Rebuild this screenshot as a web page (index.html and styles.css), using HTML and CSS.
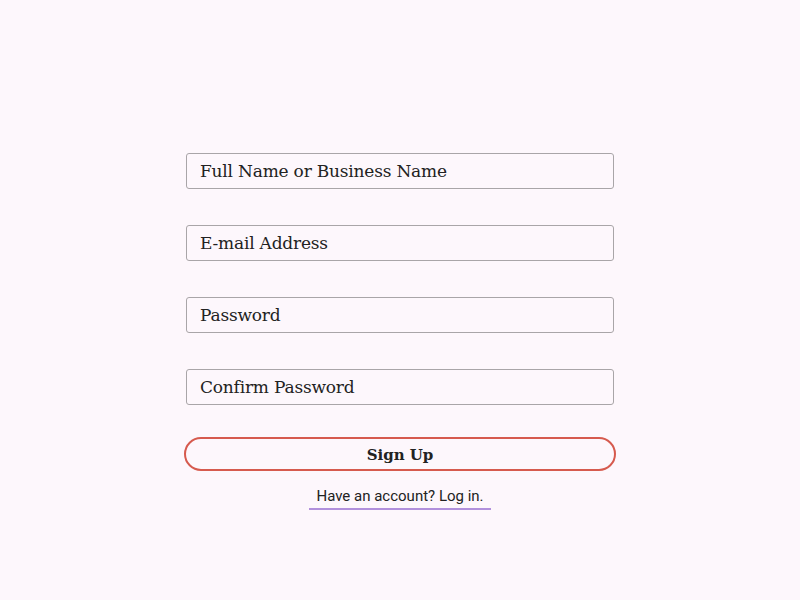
FILE: index.html
```html
<!DOCTYPE html>
<html>
<head>
<meta charset="utf-8">
<link rel="stylesheet" href="styles.css">
</head>
<body>
<main class="page">
  <form class="signup">
    <input class="field" type="text" placeholder="Full Name or Business Name">
    <input class="field" type="email" placeholder="E-mail Address">
    <input class="field" type="password" placeholder="Password">
    <input class="field" type="password" placeholder="Confirm Password">
    <button class="submit" type="button">Sign Up</button>
    <a class="login" href="#">Have an account? Log in.</a>
  </form>
</main>
</body>
</html>
```
FILE: styles.css
```css
html, body {
  margin: 0;
  padding: 0;
  background: #fdf7fc;
}
.page {
  display: flex;
  justify-content: center;
  padding-top: 153px;
}
.signup {
  width: 432px;
  display: flex;
  flex-direction: column;
  align-items: center;
}
.field {
  box-sizing: border-box;
  width: 428px;
  height: 36px;
  margin: 0 0 36px;
  padding: 0 13px;
  border: 1px solid #a9a5a8;
  border-radius: 3px;
  background: #fdf7fc;
  font-family: "Roboto Slab", "DejaVu Serif", serif;
  font-size: 17px;
  letter-spacing: -0.2px;
  color: #222;
  outline: none;
}
.field:last-of-type {
  margin-bottom: 32px;
}
.field::placeholder {
  color: #222;
  opacity: 1;
}
.submit {
  box-sizing: border-box;
  width: 432px;
  height: 34px;
  border: 2px solid #d65a4e;
  border-radius: 17px;
  background: transparent;
  font-family: "Roboto Slab", "DejaVu Serif", serif;
  font-weight: bold;
  font-size: 15px;
  color: #222;
  padding: 1px 0 0;
}
.login {
  margin-top: 16px;
  padding: 0 7px 3px;
  font-family: Roboto, "Noto Sans", sans-serif;
  font-size: 15px;
  color: #222;
  text-decoration: none;
  border-bottom: 2px solid #b190dc;
}
```
